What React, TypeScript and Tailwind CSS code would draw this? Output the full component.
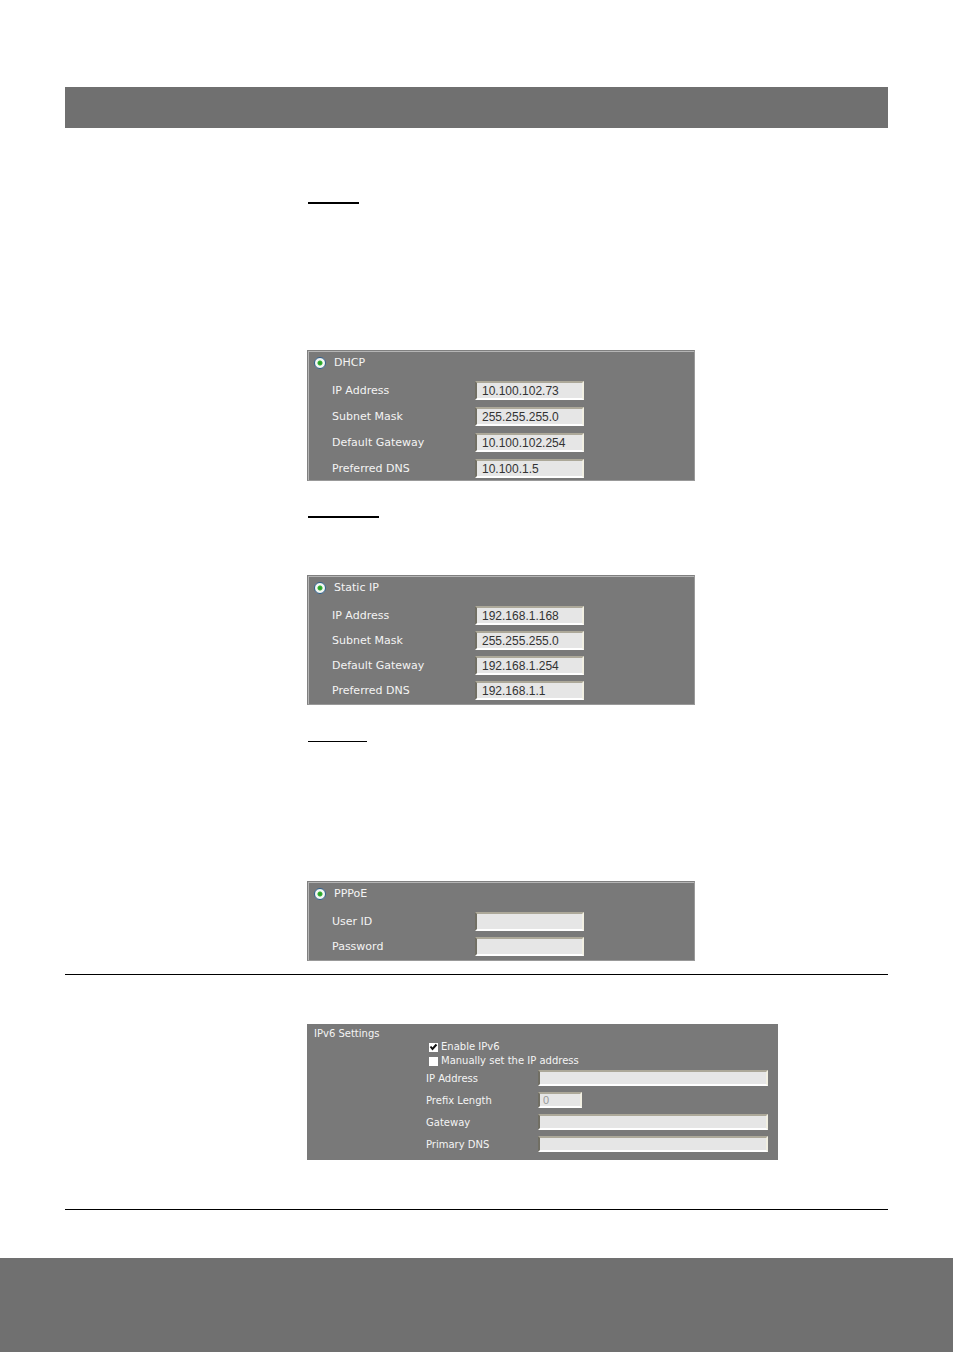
import React from 'react';
import clsx from 'clsx';

interface Field {
  id: string;
  label: string;
  value?: string;
  type?: string;
}

interface ModePanelProps {
  id: string;
  title: string;
  fields: Field[];
  roomy?: boolean;
}

const DHCP_FIELDS: Field[] = [
  { id: 'dhcp-ip', label: 'IP Address', value: '10.100.102.73' },
  { id: 'dhcp-mask', label: 'Subnet Mask', value: '255.255.255.0' },
  { id: 'dhcp-gateway', label: 'Default Gateway', value: '10.100.102.254' },
  { id: 'dhcp-dns', label: 'Preferred DNS', value: '10.100.1.5' },
];

const STATIC_FIELDS: Field[] = [
  { id: 'static-ip', label: 'IP Address', value: '192.168.1.168' },
  { id: 'static-mask', label: 'Subnet Mask', value: '255.255.255.0' },
  { id: 'static-gateway', label: 'Default Gateway', value: '192.168.1.254' },
  { id: 'static-dns', label: 'Preferred DNS', value: '192.168.1.1' },
];

const PPPOE_FIELDS: Field[] = [
  { id: 'pppoe-user', label: 'User ID' },
  { id: 'pppoe-password', label: 'Password', type: 'password' },
];

const IPV6_FIELDS: Field[] = [
  { id: 'ipv6-ip', label: 'IP Address' },
  { id: 'ipv6-prefix', label: 'Prefix Length', value: '0' },
  { id: 'ipv6-gateway', label: 'Gateway' },
  { id: 'ipv6-dns', label: 'Primary DNS' },
];

// Sunken field look shared by every text box
const inputBase =
  "rounded-none border-2 border-t-[#aca899] border-l-[#716f64] border-r-[#f1efe2] border-b-white bg-[#e6e6e6] font-['Liberation_Sans',sans-serif] outline-none";

function ModePanel({ id, title, fields, roomy }: ModePanelProps) {
  return (
    <form
      className={clsx(
        'w-[388px] max-w-full border border-t-[#808080] border-r-[#999999] border-b-[#999999] border-l-[#808080] bg-[#797979] text-[11px] leading-4 text-[#f4f4f4] shadow-[inset_1px_1px_0_#b5b5b5]',
        roomy ? 'pb-0.5' : 'pb-1'
      )}
    >
      <div className="flex h-[30px] items-start gap-2 pt-1 pl-1.5">
        <input
          id={id}
          type="radio"
          name={id}
          defaultChecked
          className="mt-0.5 size-3 shrink-0 appearance-none rounded-full border border-[#2b5c8a] bg-[#f4f7f4] checked:bg-[radial-gradient(circle,#1f9a1f_0,#35b035_2px,#f4f7f4_3px)]"
        />
        <label htmlFor={id}>{title}</label>
      </div>
      <div className={clsx('flex flex-col pl-6', roomy ? 'gap-[7px]' : 'gap-1.5')}>
        {fields.map((f) => (
          <div key={f.id} className="flex h-[19px] items-center">
            <label htmlFor={f.id} className="w-[143px] shrink-0">{f.label}</label>
            <input
              id={f.id}
              type={f.type || 'text'}
              defaultValue={f.value}
              className={clsx(inputBase, 'h-[19px] w-[109px] pt-px pl-[5px] text-[12px] leading-[13px] text-[#333333]')}
            />
          </div>
        ))}
      </div>
    </form>
  );
}

function CheckRow({ id, label, checked }: { id: string; label: string; checked?: boolean }) {
  return (
    <div className="flex h-3.5 items-center gap-[3px] pl-[3px]">
      <span className="relative size-[9px]">
        <input
          id={id}
          type="checkbox"
          defaultChecked={checked}
          className="peer block size-[9px] appearance-none bg-white"
        />
        <svg viewBox="0 0 9 9" className="pointer-events-none absolute inset-0 hidden size-[9px] peer-checked:block">
          <path d="M1.5 3.5 3.5 6 7.5 1.5" fill="none" stroke="#111" strokeWidth="2" />
        </svg>
      </span>
      <label htmlFor={id}>{label}</label>
    </div>
  );
}

function Ipv6Panel() {
  return (
    <form className="flex w-[471px] max-w-full bg-[#797979] pt-1 pb-2 pl-[7px] text-[10px] leading-3 text-[#f4f4f4]">
      <h2 className="w-28 shrink-0">IPv6 Settings</h2>
      <div className="flex-1 pt-3 pr-2.5">
        <CheckRow id="ipv6-enable" label="Enable IPv6" checked />
        <CheckRow id="ipv6-manual" label="Manually set the IP address" />
        <div className="flex flex-col gap-1.5 pt-0.5">
          {IPV6_FIELDS.map((f) => (
            <div key={f.id} className="flex h-4 items-center">
              <label htmlFor={f.id} className="w-28 shrink-0 pt-0.5">{f.label}</label>
              <input
                id={f.id}
                type="text"
                defaultValue={f.value}
                disabled={f.value !== undefined}
                className={clsx(
                  inputBase,
                  'h-4 min-w-0 pl-[3px] text-[11px] leading-3 text-[#999999]',
                  f.value !== undefined ? 'w-11' : 'flex-1'
                )}
              />
            </div>
          ))}
        </div>
      </div>
    </form>
  );
}

export default function App() {
  return (
    <div className="bg-white font-['DejaVu_Sans',sans-serif]">
      <main className="pt-[87px] pr-[66px] pb-12 pl-[65px]">
        <header className="h-[41px] bg-[#707070]" />
        <section className="border-b border-black pt-[74px] pb-[13px] pl-[242px]">
          <hr className="ml-px w-[51px] border-t-2 border-black" />
          <div className="pt-[146px] pb-[35px]">
            <ModePanel id="mode-dhcp" title="DHCP" fields={DHCP_FIELDS} roomy />
          </div>
          <hr className="ml-px w-[71px] border-t-2 border-black" />
          <div className="pt-[57px] pb-9">
            <ModePanel id="mode-static" title="Static IP" fields={STATIC_FIELDS} />
          </div>
          <hr className="ml-px w-[59px] border-t border-black" />
          <div className="pt-[139px]">
            <ModePanel id="mode-pppoe" title="PPPoE" fields={PPPOE_FIELDS} />
          </div>
        </section>
        <section className="border-b border-black pt-[49px] pb-[49px] pl-[242px]">
          <Ipv6Panel />
        </section>
      </main>
      <footer className="mr-px h-[94px] bg-[#707070]" />
    </div>
  );
}
